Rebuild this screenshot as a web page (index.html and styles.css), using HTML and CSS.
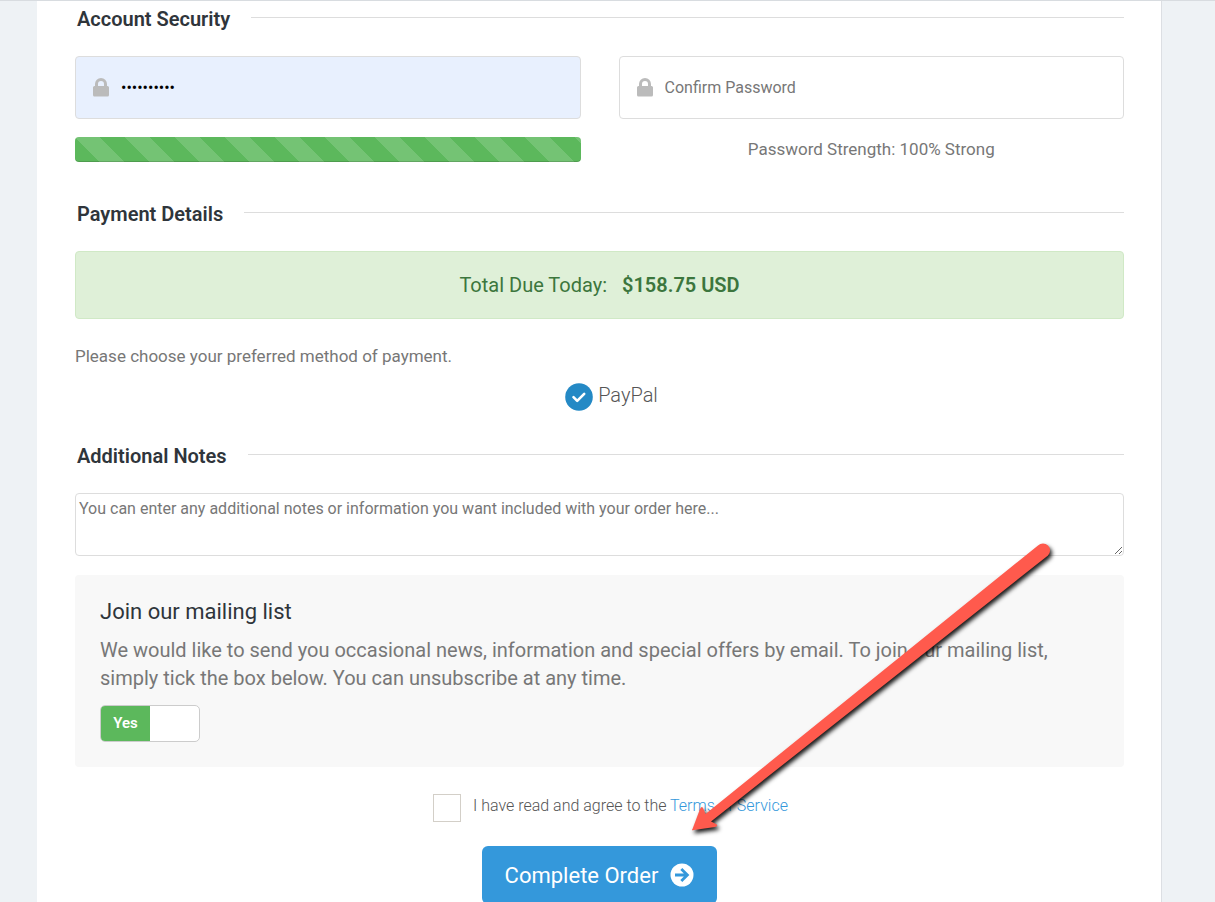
FILE: index.html
```html
<!DOCTYPE html>
<html lang="en">
<head>
    <meta charset="UTF-8">
    <meta name="viewport" content="width=device-width, initial-scale=1.0">
    <title>Checkout</title>
    <link rel="stylesheet" href="styles.css">
</head>
<body>

    <form class="checkout">
        <h2 class="sub-heading">Account Security</h2>
        <div class="row">
            <div class="field filled">
                <label for="inputPassword" aria-label="Password">
                    <svg class="lock" viewBox="0 0 16 19"><path d="M2 8V6a6 6 0 0 1 12 0v2h.5A1.5 1.5 0 0 1 16 9.500V17a1.500 1.500 0 0 1-1.500 1.500h-13A1.500 1.500 0 0 1 0 17V9.500A1.500 1.500 0 0 1 1.500 8zm3 0h6V6a3 3 0 0 0-6 0z"/></svg>
                </label>
                <input type="password" id="inputPassword" value="password12">
            </div>
            <div class="field">
                <label for="inputConfirm" aria-label="Confirm Password">
                    <svg class="lock" viewBox="0 0 16 19"><path d="M2 8V6a6 6 0 0 1 12 0v2h.5A1.5 1.5 0 0 1 16 9.500V17a1.500 1.500 0 0 1-1.500 1.500h-13A1.500 1.500 0 0 1 0 17V9.500A1.500 1.500 0 0 1 1.500 8zm3 0h6V6a3 3 0 0 0-6 0z"/></svg>
                </label>
                <input type="password" id="inputConfirm" placeholder="Confirm Password">
            </div>
            <div class="progress"></div>
            <p class="strength">Password Strength: 100% Strong</p>
        </div>

        <h2 class="sub-heading">Payment Details</h2>
        <div class="total">Total Due Today: <strong>$158.75 USD</strong></div>
        <p class="method">Please choose your preferred method of payment.</p>
        <label class="gateway">
            <input type="radio" name="gateway" checked>
            <svg viewBox="0 0 28 28"><circle cx="14" cy="14" r="13.800" fill="#2489c5"/><path d="M8.500 14.200l3.700 3.700 7-7" fill="none" stroke="#fff" stroke-width="2.600" stroke-linecap="round" stroke-linejoin="round"/></svg>
            <span>PayPal</span>
        </label>

        <h2 class="sub-heading">Additional Notes</h2>
        <textarea class="notes" aria-label="Additional Notes" placeholder="You can enter any additional notes or information you want included with your order here..."></textarea>

        <div class="mailing">
            <h3>Join our mailing list</h3>
            <p>We would like to send you occasional news, information and special offers by email. To join our mailing list, simply tick the box below. You can unsubscribe at any time.</p>
            <label class="switch">
                <input type="checkbox" checked>
                <span class="on">Yes</span>
            </label>
        </div>

        <div class="agree">
            <input type="checkbox" id="accepttos">
            <label for="accepttos">I have read and agree to the <a href="#">Terms of Service</a></label>
        </div>

        <button type="submit" class="complete">
            Complete Order
            <svg viewBox="0 0 24 24"><circle cx="12" cy="12" r="11.500" fill="#fff"/><path d="M5 12h12M11.300 5.900l6.100 6.100-6.100 6.100" fill="none" stroke="#3498db" stroke-width="2.800"/></svg>
        </button>
    </form>

    <svg class="arrow" width="380" height="310" viewBox="685 535 380 310">
        <path d="M692.500 829L700 809Q702 805 703.500 809L705.500 814L1038 545.500A7 7 0 0 1 1048 555.500L711 821.500L716 824Q719 826 715 827L694 830Q691 831 692.500 829Z"/>
    </svg>

</body>
</html>
```

FILE: styles.css
```css
* {
    box-sizing: border-box;
}
body {
    margin: 0;
    height: 100vh;
    overflow: hidden;
    position: relative;
    font-family: Roboto, "Liberation Sans", sans-serif;
    font-size: 17px;
    color: #777;
    background-color: #eef2f5;
    border-top: 1px solid #d8dce0;
}
p {
    margin: 0;
}
input, textarea, button {
    font-family: inherit;
}

.checkout {
    margin: 0 53px 0 37px;
    padding: 6px 37px 40px 38px;
    background-color: #fff;
    border-right: 1px solid #dcdfe3;
}

/* Section titles */
.sub-heading {
    display: flex;
    align-items: center;
    gap: 21px;
    margin: 0 0 25px;
    padding-left: 2px;
    font-size: 20px;
    line-height: 24px;
    font-weight: 600;
    color: #2f353b;
}
.sub-heading::after {
    content: "";
    flex: 1;
    height: 1px;
    margin-bottom: 3px;
    background-color: #ddd;
}

/* Passwords */
.row {
    display: grid;
    grid-template-columns: 1fr 1fr;
    gap: 18px 38px;
    margin-bottom: 40px;
}
.field {
    display: flex;
    align-items: center;
    height: 63px;
    padding-left: 17px;
    border: 1px solid #ddd;
    border-radius: 4px;
}
.filled {
    background-color: #e8f0fe;
}
.field label {
    display: flex;
}
.lock {
    width: 16px;
    height: 19px;
    fill: #bbb;
}
.field input {
    flex: 1;
    min-width: 0;
    padding: 0 12px;
    border: none;
    outline: none;
    background: none;
    font-size: 16px;
    color: #000;
}
::placeholder {
    color: #777;
}
.progress {
    height: 25px;
    border-radius: 4px;
    background-color: #5cb85c;
    background-image: linear-gradient(45deg, rgba(255, 255, 255, 0.15) 25%, transparent 25%, transparent 50%, rgba(255, 255, 255, 0.15) 50%, rgba(255, 255, 255, 0.15) 75%, transparent 75%);
    background-size: 50px 50px;
    box-shadow: inset 0 -1px 0 rgba(0, 0, 0, 0.15);
}
.strength {
    line-height: 25px;
    text-align: center;
}

/* Payment */
.total {
    padding: 21px;
    border: 1px solid #d0e9c6;
    border-radius: 4px;
    background-color: #dff0d8;
    color: #3c763d;
    font-size: 20px;
    line-height: 24px;
    text-align: center;
}
.total strong {
    margin-left: 10px;
    font-weight: 600;
}
.method {
    margin: 25px 0 15px;
    line-height: 24px;
}
.gateway {
    display: flex;
    justify-content: center;
    gap: 5px;
    margin-bottom: 33px;
    padding-left: 24px;
    font-size: 20px;
    line-height: 24px;
    font-weight: 300;
    color: #555;
}
.gateway input, .switch input {
    position: absolute;
    opacity: 0;
}
.gateway svg {
    width: 28px;
    height: 28px;
}

.notes {
    display: block;
    width: 100%;
    height: 63px;
    margin-bottom: 19px;
    padding: 5px 3px;
    border: 1px solid #ddd;
    border-radius: 4px;
    font-size: 16px;
}

/* Mailing list */
.mailing {
    padding: 23px 25px 25px;
    border-radius: 4px;
    background-color: #f8f8f8;
    font-size: 20px;
    line-height: 28px;
}
.mailing h3 {
    margin: 0 0 10px;
    font-size: 22px;
    font-weight: 400;
    color: #2f353b;
}
.switch {
    display: flex;
    width: 100px;
    height: 37px;
    margin-top: 13px;
    border: 1px solid #ccc;
    border-radius: 5px;
    background-color: #fff;
    overflow: hidden;
}
.on {
    width: 50%;
    background-color: #5cb85c;
    color: #fff;
    font-size: 15px;
    line-height: 35px;
    font-weight: 600;
    text-align: center;
}

.agree {
    display: flex;
    justify-content: center;
    gap: 12px;
    margin: 27px 0 24px;
    padding-left: 22px;
    font-size: 16px;
    line-height: 24px;
    font-weight: 300;
    color: #555;
}
.agree input {
    appearance: none;
    width: 28px;
    height: 28px;
    margin: 0;
    border: 1px solid #d3cfc8;
    background-color: #fff;
}
.agree a {
    color: #3498db;
    text-decoration: none;
}
.complete {
    display: flex;
    align-items: center;
    gap: 12px;
    height: 58px;
    margin: 0 auto;
    padding: 0 23px;
    border: none;
    border-radius: 6px;
    background-color: #3498db;
    color: #fff;
    font-size: 22px;
    cursor: pointer;
}
.complete svg {
    width: 24px;
    height: 24px;
}

/* Pointer to the order button */
.arrow {
    position: absolute;
    left: 685px;
    top: 534px;
    pointer-events: none;
    fill: #ff5a4d;
    filter: drop-shadow(2px 3px 2px rgba(0, 0, 0, 0.9));
}
```
